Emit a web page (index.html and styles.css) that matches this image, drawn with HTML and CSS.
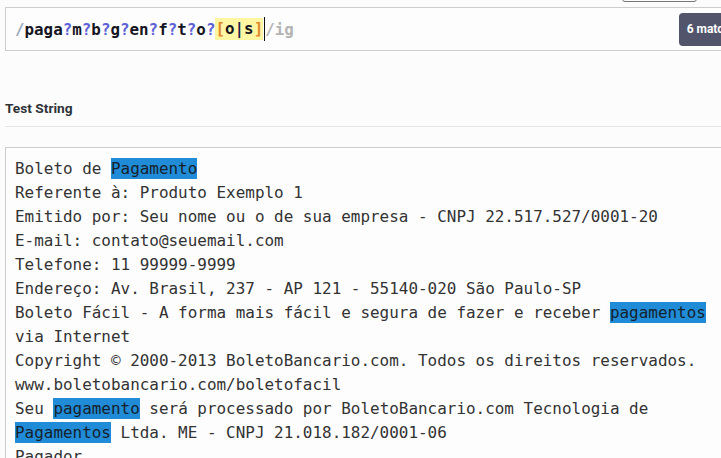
FILE: index.html
```html
<!DOCTYPE html>
<html>
<head>
<meta charset="utf-8">
<link rel="stylesheet" href="styles.css">
</head>
<body>
<div class="page">
  <div class="top-tab"></div>
  <div class="regex-box">
    <div class="regex"><span class="delim">/</span>paga<span class="q">?</span>m<span class="q">?</span>b<span class="q">?</span>g<span class="q">?</span>en<span class="q">?</span>f<span class="q">?</span>t<span class="q">?</span>o<span class="q">?</span><span class="set"><span class="br">[</span>o<span class="alt">|</span>s<span class="br">]</span></span><span class="caret"></span><span class="flags">/ig</span></div>
    <div class="badge">6 matches</div>
  </div>
  <div class="heading">Test String</div>
  <div class="test-box">
<div class="line">Boleto de <span class="m">Pagamento</span></div>
<div class="line">Referente à: Produto Exemplo 1</div>
<div class="line">Emitido por: Seu nome ou o de sua empresa - CNPJ 22.517.527/0001-20</div>
<div class="line">E-mail: contato@seuemail.com</div>
<div class="line">Telefone: 11 99999-9999</div>
<div class="line">Endereço: Av. Brasil, 237 - AP 121 - 55140-020 São Paulo-SP</div>
<div class="line">Boleto Fácil - A forma mais fácil e segura de fazer e receber <span class="m">pagamentos</span></div>
<div class="line">via Internet</div>
<div class="line">Copyright © 2000-2013 BoletoBancario.com. Todos os direitos reservados.</div>
<div class="line">www.boletobancario.com/boletofacil</div>
<div class="line">Seu <span class="m">pagamento</span> será processado por BoletoBancario.com Tecnologia de</div>
<div class="line"><span class="m">Pagamentos</span> Ltda. ME - CNPJ 21.018.182/0001-06</div>
<div class="line">Pagador</div>
  </div>
</div>
</body>
</html>
```

FILE: styles.css
```css
html, body {
  margin: 0;
  padding: 0;
  background: #fcfcfc;
  overflow: hidden;
}
.page {
  position: relative;
  width: 755px;
  padding: 7px 0 0 5px;
}
.top-tab {
  position: absolute;
  left: 622px;
  top: -30px;
  width: 73px;
  height: 30px;
  border: 1px solid #777;
  border-radius: 3px;
  background: #fcfcfc;
}
.regex-box {
  display: flex;
  align-items: center;
  height: 42px;
  border: 1px solid #cdcdcd;
  background: #fdfdfd;
  padding: 0 7px 0 9px;
}
.regex {
  flex: 1;
  display: flex;
  align-items: center;
  font-family: "DejaVu Sans Mono", monospace;
  font-weight: bold;
  font-size: 15.85px;
  color: #15151f;
  white-space: pre;
}
.delim { color: #9aa8ba; }
.q { color: #5d62d6; }
.set {
  background: #fff6a3;
  line-height: 22px;
}
.br { color: #df8a2f; }
.alt { color: #1c2550; }
.caret {
  display: inline-block;
  width: 1px;
  height: 24px;
  background: #111;
  margin-left: 1px;
}
.flags { color: #b4b4b4; }
.badge {
  height: 33px;
  display: flex;
  align-items: center;
  padding: 0 9px 0 8px;
  background: #51546b;
  color: #fff;
  border-radius: 4px;
  font-family: Roboto, "Liberation Sans", sans-serif;
  font-weight: bold;
  font-size: 12px;
}
.heading {
  margin-top: 49px;
  padding-bottom: 10px;
  border-bottom: 1px solid #e6e6e6;
  font-family: Roboto, "Liberation Sans", sans-serif;
  font-weight: bold;
  font-size: 13.7px;
  line-height: 16px;
  color: #2f3338;
}
.test-box {
  margin-top: 20px;
  border: 1px solid #cccccc;
  background: #fdfdfd;
  padding: 9px 9px 8px;
  font-family: "DejaVu Sans Mono", monospace;
  font-size: 15.95px;
  line-height: 24px;
  color: #333;
}
.line {
  white-space: pre;
}
.m {
  background: #208bd6;
  color: #15222e;
  padding: 1px 0;
}
```
